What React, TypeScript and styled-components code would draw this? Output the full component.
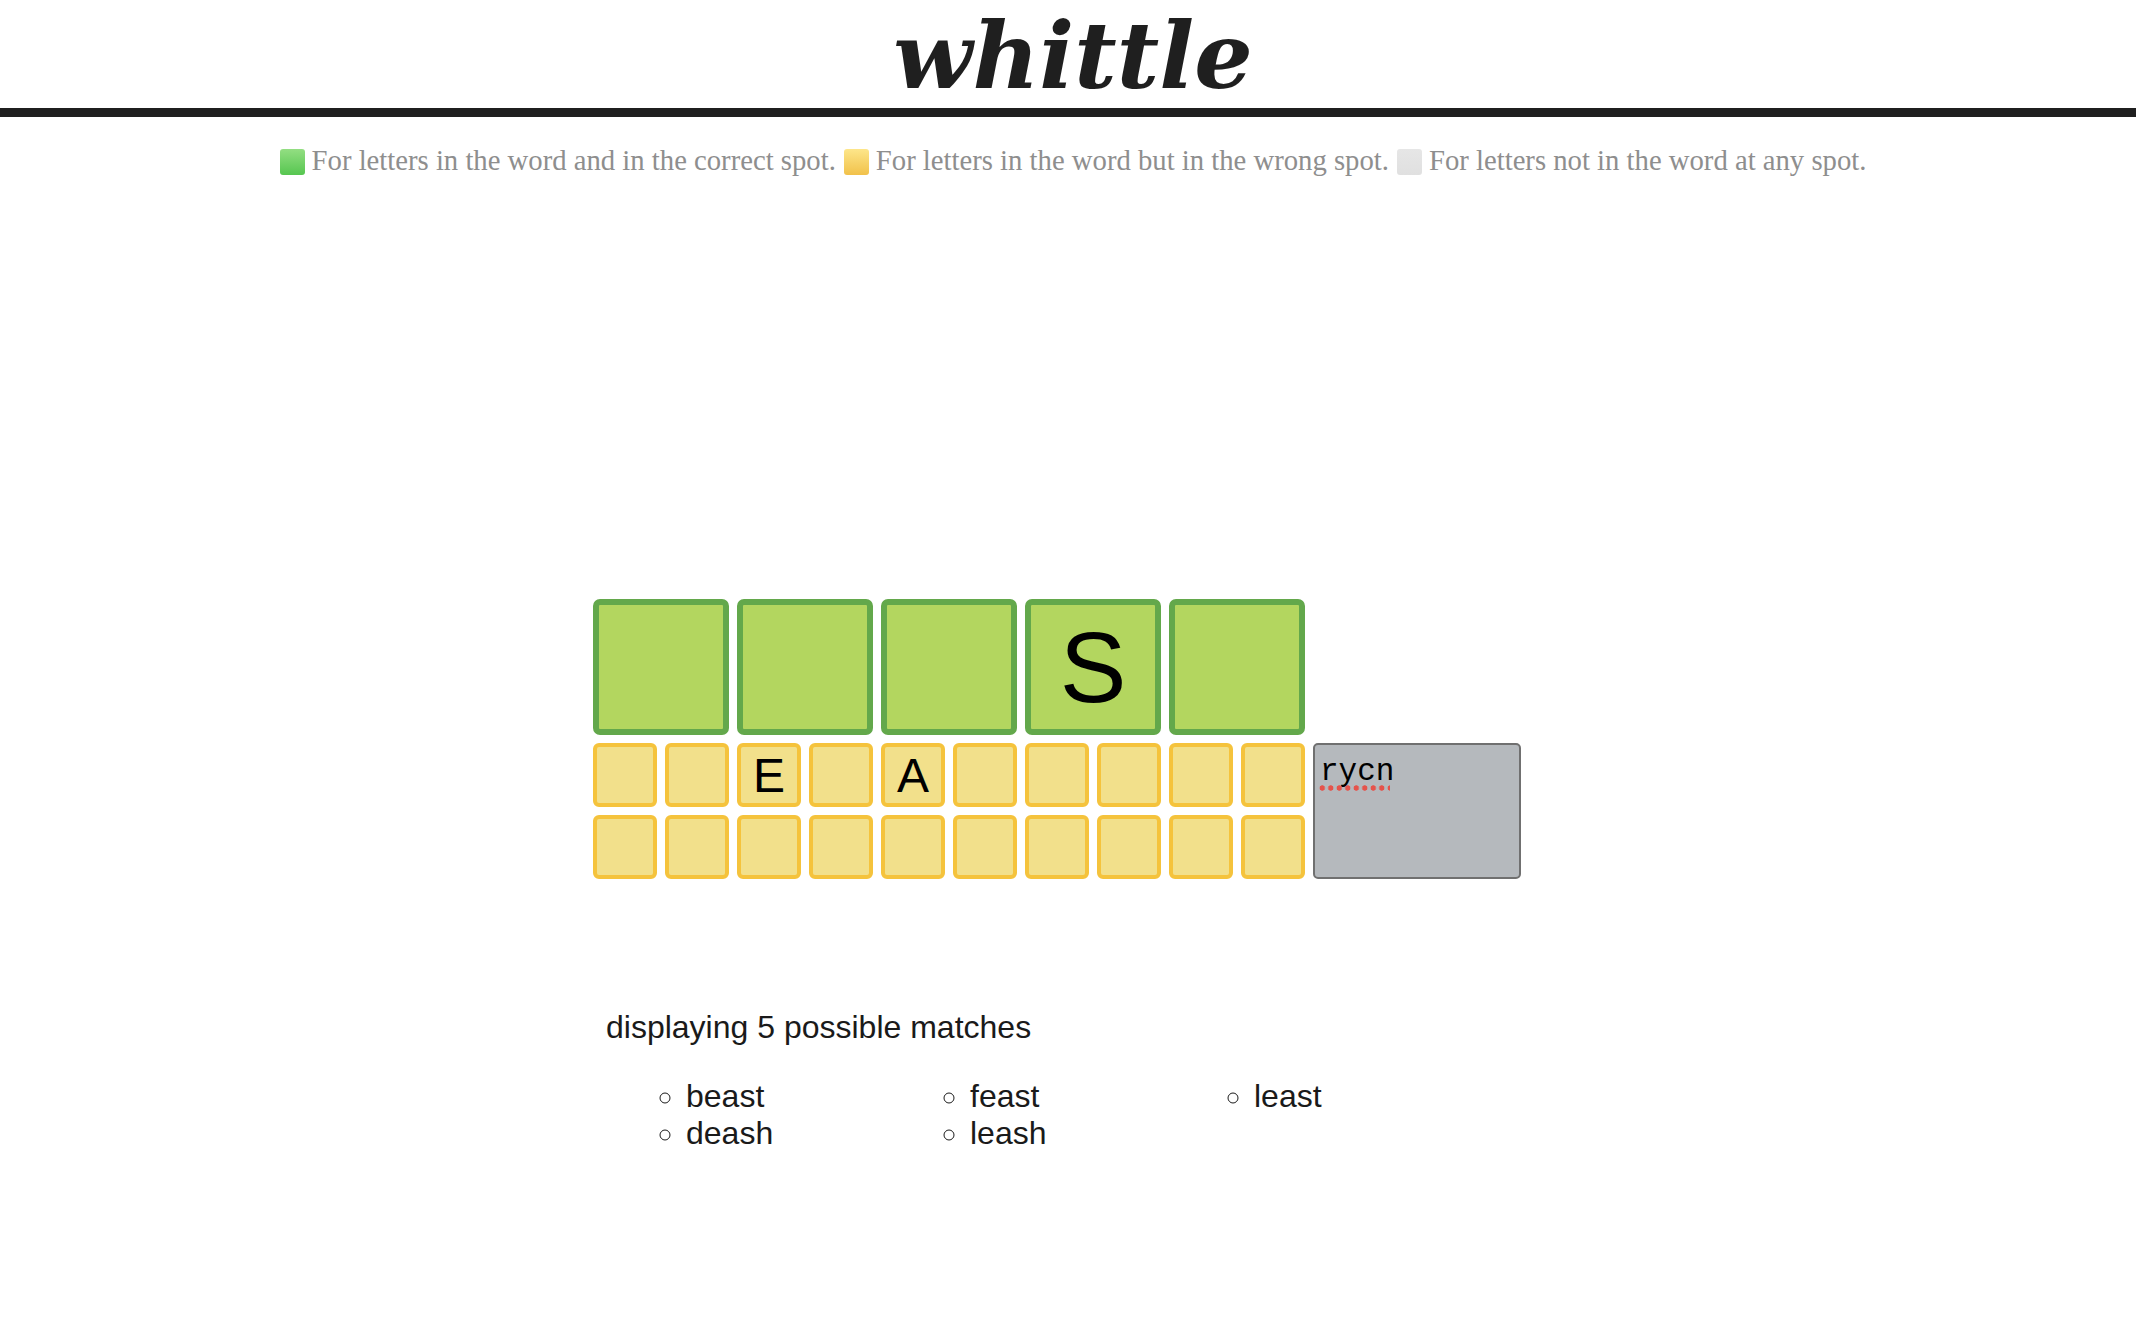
import React from "react";
import styled, { createGlobalStyle } from "styled-components";

const GlobalStyle = createGlobalStyle`
  html, body {
    margin: 0;
    padding: 0;
    background: #ffffff;
  }
  body {
    font-family: "Liberation Sans", Arial, sans-serif;
    color: #1a1a1a;
  }
`;

const LEGEND: { tone: "green" | "yellow" | "gray"; text: string }[] = [
  { tone: "green", text: "For letters in the word and in the correct spot." },
  { tone: "yellow", text: "For letters in the word but in the wrong spot." },
  { tone: "gray", text: "For letters not in the word at any spot." },
];

const CORRECT = ["", "", "", "S", ""];
const PRESENT_ROWS = [
  ["", "", "E", "", "A", "", "", "", "", ""],
  ["", "", "", "", "", "", "", "", "", ""],
];
const MATCHES = ["beast", "deash", "feast", "leash", "least"];

const swatch = {
  green: "linear-gradient(#93de82, #56c650)",
  yellow: "linear-gradient(#fde68a, #f1c14a)",
  gray: "linear-gradient(#e6e6e6, #e0e0e0)",
};

const Header = styled.header`
  padding-top: 6px;
  padding-bottom: 2px;
  border-bottom: 9px solid #1f1f1f;
`;

const Title = styled.h1`
  margin: 0;
  padding-left: 10px;
  height: 100px;
  line-height: 100px;
  text-align: center;
  font-family: "DejaVu Serif", Georgia, serif;
  font-style: italic;
  font-weight: 700;
  font-size: 92px;
  color: #1f1f1f;
`;

const Legend = styled.p`
  margin: 28px 0 0;
  padding-left: 10px;
  text-align: center;
  font-family: "Liberation Serif", Georgia, serif;
  font-size: 28.7px;
  line-height: 30px;
  color: #8e8e8e;
`;

const LegendItem = styled.span`
  & + & {
    margin-left: 8px;
  }
`;

const Swatch = styled.span<{ $tone: "green" | "yellow" | "gray" }>`
  display: inline-block;
  width: 25px;
  height: 26px;
  margin-right: 7px;
  border-radius: 3px;
  vertical-align: -5px;
  background: ${(p) => swatch[p.$tone]};
`;

const Main = styled.main`
  width: 950px;
  margin: 0 auto;
  padding-top: 424px;
`;

const Board = styled.div`
  display: grid;
  grid-template-columns: repeat(10, 64px) 208px;
  grid-template-rows: 136px 64px 64px;
  gap: 8px;
`;

const Tile = styled.div<{ $big?: boolean }>`
  box-sizing: border-box;
  display: flex;
  align-items: center;
  justify-content: center;
  grid-column: ${(p) => (p.$big ? "span 2" : "span 1")};
  border: ${(p) => (p.$big ? "6px solid #63a84b" : "4px solid #f5c33c")};
  border-radius: ${(p) => (p.$big ? "7px" : "6px")};
  background: ${(p) => (p.$big ? "#b3d65f" : "#f2e08b")};
  font-family: "Liberation Sans", Arial, sans-serif;
  font-size: ${(p) => (p.$big ? "100px" : "48px")};
  color: #000;
`;

const Spacer = styled.div``;

const GuessBox = styled.div`
  box-sizing: border-box;
  grid-column: 11;
  grid-row: 2 / span 2;
  padding: 9px 5px;
  border: 2px solid #707070;
  border-radius: 5px;
  background: #b5b9bd;
  font-family: "Liberation Mono", "Courier New", monospace;
  font-size: 31px;
  line-height: normal;
  color: #000;
`;

const Misspelt = styled.span`
  position: relative;
  &::after {
    content: "";
    position: absolute;
    left: -2px;
    right: 4px;
    bottom: -2px;
    height: 6px;
    background-image: radial-gradient(circle, #e5534b 2.4px, transparent 3px);
    background-size: 8.5px 6px;
    background-repeat: repeat-x;
  }
`;

const Matches = styled.section`
  margin-top: 130px;
  padding: 0 13px;
`;

const Count = styled.p`
  margin: 0 0 32px;
  font-size: 32px;
`;

const MatchList = styled.ul`
  margin: 0;
  padding: 0 24px 0 80px;
  column-count: 3;
  column-gap: 32px;
  list-style-type: circle;
  font-size: 32px;
`;

const App = () => {
  return (
    <>
      <GlobalStyle />
      <Header>
        <Title>whittle</Title>
      </Header>
      <Legend>
        {LEGEND.map((item) => (
          <LegendItem key={item.tone}>
            <Swatch $tone={item.tone} />
            {item.text}
          </LegendItem>
        ))}
      </Legend>
      <Main>
        <Board>
          {CORRECT.map((letter, inx) => (
            <Tile key={"c" + inx} $big>
              {letter}
            </Tile>
          ))}
          <Spacer />
          {PRESENT_ROWS[0].map((letter, inx) => (
            <Tile key={"a" + inx}>{letter}</Tile>
          ))}
          <GuessBox role="textbox">
            <Misspelt>rycn</Misspelt>
          </GuessBox>
          {PRESENT_ROWS[1].map((letter, inx) => (
            <Tile key={"b" + inx}>{letter}</Tile>
          ))}
        </Board>
        <Matches>
          <Count>displaying {MATCHES.length} possible matches</Count>
          <MatchList>
            {MATCHES.map((word) => (
              <li key={word}>{word}</li>
            ))}
          </MatchList>
        </Matches>
      </Main>
    </>
  );
};

export default App;
